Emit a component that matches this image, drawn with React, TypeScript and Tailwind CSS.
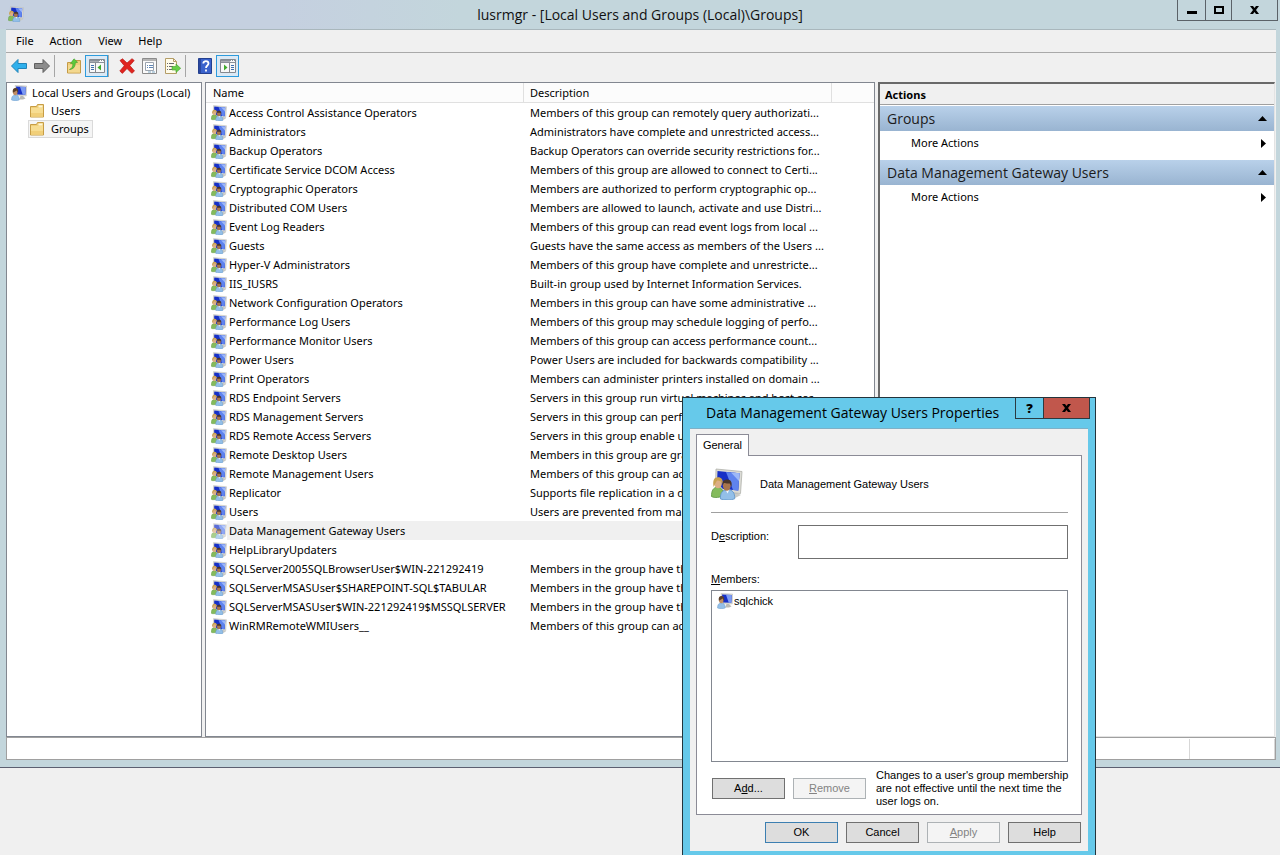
import type { ReactNode } from "react";

interface IGroup {
  name: string;
  desc: string;
}

const groups: IGroup[] = [
  { name: "Access Control Assistance Operators", desc: "Members of this group can remotely query authorizati..." },
  { name: "Administrators", desc: "Administrators have complete and unrestricted access..." },
  { name: "Backup Operators", desc: "Backup Operators can override security restrictions for..." },
  { name: "Certificate Service DCOM Access", desc: "Members of this group are allowed to connect to Certi..." },
  { name: "Cryptographic Operators", desc: "Members are authorized to perform cryptographic op..." },
  { name: "Distributed COM Users", desc: "Members are allowed to launch, activate and use Distri..." },
  { name: "Event Log Readers", desc: "Members of this group can read event logs from local ..." },
  { name: "Guests", desc: "Guests have the same access as members of the Users ..." },
  { name: "Hyper-V Administrators", desc: "Members of this group have complete and unrestricte..." },
  { name: "IIS_IUSRS", desc: "Built-in group used by Internet Information Services." },
  { name: "Network Configuration Operators", desc: "Members in this group can have some administrative ..." },
  { name: "Performance Log Users", desc: "Members of this group may schedule logging of perfo..." },
  { name: "Performance Monitor Users", desc: "Members of this group can access performance count..." },
  { name: "Power Users", desc: "Power Users are included for backwards compatibility ..." },
  { name: "Print Operators", desc: "Members can administer printers installed on domain ..." },
  { name: "RDS Endpoint Servers", desc: "Servers in this group run virtual machines and host ses..." },
  { name: "RDS Management Servers", desc: "Servers in this group can perf..." },
  { name: "RDS Remote Access Servers", desc: "Servers in this group enable u..." },
  { name: "Remote Desktop Users", desc: "Members in this group are gra..." },
  { name: "Remote Management Users", desc: "Members of this group can ac..." },
  { name: "Replicator", desc: "Supports file replication in a d..." },
  { name: "Users", desc: "Users are prevented from mak..." },
  { name: "Data Management Gateway Users", desc: "" },
  { name: "HelpLibraryUpdaters", desc: "" },
  { name: "SQLServer2005SQLBrowserUser$WIN-221292419", desc: "Members in the group have th..." },
  { name: "SQLServerMSASUser$SHAREPOINT-SQL$TABULAR", desc: "Members in the group have th..." },
  { name: "SQLServerMSASUser$WIN-221292419$MSSQLSERVER", desc: "Members in the group have th..." },
  { name: "WinRMRemoteWMIUsers__", desc: "Members of this group can ac..." },
];

const selected = "Data Management Gateway Users";

const GroupIcon = ({ className = "size-4" }: { className?: string }) => (
  <svg viewBox="0 0 32 32" className={`${className} shrink-0`}>
    <path d="M24 24l6 3-6 3h-8z" fill="#c9cac6" />
    <path d="M5 1 31 3.500 29.500 25.500 14 24 4.500 17z" fill="#dcdcd6" stroke="#b0b1ab" strokeWidth=".8" />
    <path d="M6.500 3 28.500 5.200 27.300 22.500 12 21 6 15z" fill="#1730c6" />
    <path d="M15 3.900 28.500 5.200 27.300 22.500 22 22z" fill="#5f83ee" />
    <path d="M20 4.400 28.500 5.200 27.900 13z" fill="#9db8f8" />
    <path d="M.5 28.500C.3 22.500 2.500 19.500 6 19.200c4-.2 6.500 2.800 6.500 8.300-2.800 2-9 2.800-12 1z" fill="#84bb5c" stroke="#5b9340" strokeWidth=".8" />
    <ellipse cx="7" cy="15" rx="3.900" ry="5.300" fill="#dcae85" />
    <path d="M2.600 19C1.500 12.500 3 9.300 7 9.300c3.500 0 5.200 2.500 4.800 6.700-1.300-2.400-3-3.400-5.500-3.400-1.300 1-2 3.200-3.700 6.400z" fill="#c9a253" />
    <path d="M9.500 31C9 25 11.500 21.800 16.500 21.600c5 0 7.500 3.200 7.200 9.200-3.200 1.500-10.500 1.600-14.200.2z" fill="#93bfe8" stroke="#5d92c8" strokeWidth=".8" />
    <path d="M14.500 21.500h4l-2 4z" fill="#f4f8fc" />
    <ellipse cx="15.800" cy="17.500" rx="3.900" ry="5.200" fill="#a8754d" />
    <path d="M11.600 17.500C11 13.500 12.700 11.500 16.200 11.500c3.600.1 5.300 2.600 4.200 7.200L18.800 15.500c-2.500.3-5-.3-6-.5z" fill="#49352a" />
  </svg>
);

const UserIcon = () => (
  <svg viewBox="0 0 32 32" className="size-4 shrink-0">
    <path d="M19 22h5l5 5-5 2h-8z" fill="#b9bab5" />
    <path d="M8 1 31.500 2 30.500 22 12 22z" fill="#dcdcd6" stroke="#b0b1ab" strokeWidth=".8" />
    <path d="M10 3 29.500 4 28.700 19.500 12 19z" fill="#1730c6" />
    <path d="M18 3.400 29.500 4 28.700 19.500 23.500 19.300z" fill="#7c9bf3" />
    <path d="M1 30C.8 23.500 3.500 20 8.500 20s8.300 3.500 8 10c-3.500 1.800-12 1.800-15.500 0z" fill="#93bfe8" stroke="#5d92c8" strokeWidth=".8" />
    <ellipse cx="8.500" cy="14" rx="4.600" ry="6.500" fill="#c08d63" />
    <path d="M3.700 15.500C2.500 9 4.500 5.800 9 5.800c4.500.1 6.500 3.900 5 10L11.500 11z" fill="#5a3e28" />
  </svg>
);

const FolderIcon = () => (
  <svg viewBox="0 0 16 16" className="size-4 shrink-0">
    <path d="M1.500 3.500h6l1-2h6v12.500h-13z" fill="#f0cf78" stroke="#c79d45" />
    <path d="M9.500 2.500h4v2h-4z" fill="#fff6d8" />
    <path d="M2 5h12v8.500H2z" fill="#f7dd92" />
    <path d="M2 10h12v3.500H2z" fill="#f1cf79" />
  </svg>
);

const ArrowIcon = ({ forward = false }: { forward?: boolean }) => (
  <svg viewBox="0 0 16 16" className="size-4">
    {forward ? (
      <path d="M15.500 8 9 1.500v4H.5v5H9v4z" fill="#8b8b8b" stroke="#5f5f5f" strokeLinejoin="round" />
    ) : (
      <path d="M.5 8 7 1.500v4h8.500v5H7v4z" fill="#2fb0ec" stroke="#2284b8" strokeLinejoin="round" />
    )}
  </svg>
);

const UpFolderIcon = () => (
  <svg viewBox="0 0 16 16" className="size-4">
    <path d="M1.500 4.500h7l1-2h5v12.500h-13z" fill="#efce7a" stroke="#c49a47" />
    <path d="M2 7h12v7.500H2z" fill="#f3d88f" />
    <path d="M3.500 11.500C6 10.500 7 8.500 6.800 5.500H4.500L8 .8l3.600 3.500-2.400.6c.2 4-2 6.300-5.700 6.600z" fill="#5ccb3c" stroke="#3f9c2a" strokeWidth=".6" />
  </svg>
);

// console pane toggles, tree on the left or actions on the right
const PaneIcon = ({ right = false }: { right?: boolean }) => (
  <svg viewBox="0 0 16 14" className="h-[14px] w-4">
    <path d="M.5.5h15v13H.5z" fill="#f8f8f8" stroke="#85898f" />
    <path d="M1 1h14v1H1zM1 3h14v1H1z" fill="#8a9099" />
    <path d="M1 2h9v1H1z" fill="#a9adb3" />
    <path d="M11 1h1v1h-1zM13 1h1v1h-1z" fill="#fff" />
    <path d={right ? "M9.500 4v9" : "M6.500 4v9"} stroke="#85898f" />
    <path d={right ? "M11 6.500h3M11 8.500h3M11 10.500h3" : "M2 6.500h3M2 8.500h3M2 10.500h3"} stroke="#3f6fae" />
    <path d={right ? "M4 5.500v6l3.500-3z" : "M12 5.500v6l-3.500-3z"} fill="#3faa2c" />
  </svg>
);

const DeleteIcon = () => (
  <svg viewBox="0 0 16 16" className="size-4">
    <path d="M1 2.500 3.500.8 8 5l5-4.300 2.200 1.800L10.800 7.600l4.700 5.400-2.700 2.300L8 10.500l-4.600 4.900L.8 13l4.500-5.300z" fill="#e0241f" stroke="#b71713" strokeWidth=".7" />
  </svg>
);

const PropsIcon = () => (
  <svg viewBox="0 0 16 16" className="size-4">
    <path d="M.5.5h14v15H.5z" fill="#fafafa" stroke="#8b8b8b" />
    <path d="M1 1h13v2H1z" fill="#b5b5b5" />
    <path d="M3.500 4.500h8v8h-8z" fill="#fff" stroke="#9ca4ae" />
    <path d="M5 7.500h1M7 7.500h4M5 9.500h1M7 9.500h4" stroke="#5f86b5" />
    <path d="M6 14h3M10 14h3" stroke="#7fa9c4" />
  </svg>
);

const ExportIcon = () => (
  <svg viewBox="0 0 16 16" className="size-4">
    <path d="M.5.5h8l3 3v12H.5z" fill="#fffbe9" stroke="#b49d66" />
    <path d="M8.500.5v3h3" fill="none" stroke="#b49d66" />
    <path d="M2 5.500h1M2 8.500h1M2 11.500h1M4 5.500h5M4 8.500h4M4 11.500h3" stroke="#66666e" />
    <path d="M7 8.500h4V6l4.700 4.300L11 14.500V12H7z" fill="#67cf48" stroke="#43a02c" strokeWidth=".6" />
  </svg>
);

const HelpIcon = () => (
  <svg viewBox="0 0 14 16" className="h-4 w-[14px]">
    <path d="M.5.5h13v15H.5z" fill="#3a62cc" stroke="#24408f" />
    <path d="M1 1h2v14H1z" fill="#2a479f" />
    <path d="M5.300 5.500c0-3.300 5.200-3.300 5.200 0 0 2-2.500 2-2.500 4.500M8 11.500v2" fill="none" stroke="#fff" strokeWidth="1.800" />
  </svg>
);

const CloseMark = () => (
  <svg viewBox="0 0 9 8" className="h-2 w-[9px]">
    <path d="M0 0h3l1.500 2L6 0h3L6 4l3 4H6L4.500 6 3 8H0l3-4z" />
  </svg>
);

const ToolButton = ({ label, active = false, children }: { label: string; active?: boolean; children: ReactNode }) => (
  <button
    type="button"
    aria-label={label}
    className={
      active
        ? "flex h-[22px] w-[23px] items-center justify-center border border-[#2d9bdc] bg-[#dbe9f5]"
        : "flex h-[22px] w-[23px] items-center justify-center"
    }
  >
    {children}
  </button>
);

const Separator = () => <span className="h-[22px] w-px bg-[#a6a6a6]" />;

const TitleBar = () => (
  <header className="flex h-[29px] shrink-0 items-start bg-[linear-gradient(90deg,#c5d0e0_0,#c5d0e0_22%,#c3d6dc_36%)]">
    <div className="flex w-[103px] pt-[6px] pl-2">
      <GroupIcon />
    </div>
    <h1 className="flex-1 text-center font-['Open_Sans','Noto_Sans',sans-serif] text-[14px] leading-[30px] text-[#111]">
      lusrmgr - [Local Users and Groups (Local)\Groups]
    </h1>
    <div className="mr-[2px] flex h-[21px] border border-t-0 border-[#5b6268]">
      <button type="button" aria-label="Minimize" className="flex w-7 items-center justify-center border-r border-[#5b6268]">
        <svg viewBox="0 0 10 10" className="size-[10px]">
          <path d="M0 6h10v3H0z" />
        </svg>
      </button>
      <button type="button" aria-label="Maximize" className="flex w-[26px] items-center justify-center border-r border-[#5b6268]">
        <svg viewBox="0 0 10 8" className="h-2 w-[10px]">
          <path d="M1 1h8v6H1z" fill="none" stroke="#000" strokeWidth="2" />
        </svg>
      </button>
      <button type="button" aria-label="Close" className="flex w-[45px] items-center justify-center">
        <CloseMark />
      </button>
    </div>
  </header>
);

const Toolbar = () => (
  <div role="toolbar" className="flex h-[30px] shrink-0 items-center border-t border-[#a9a9a9] pb-1 pl-px">
    <div className="flex pr-px">
      <ToolButton label="Back">
        <ArrowIcon />
      </ToolButton>
      <ToolButton label="Forward">
        <ArrowIcon forward />
      </ToolButton>
    </div>
    <Separator />
    <div className="flex pl-[7px]">
      <ToolButton label="Up one level">
        <UpFolderIcon />
      </ToolButton>
      <ToolButton label="Show/Hide Console Tree" active>
        <PaneIcon />
      </ToolButton>
    </div>
    <Separator />
    <div className="flex pr-px pl-[6px]">
      <ToolButton label="Delete">
        <DeleteIcon />
      </ToolButton>
      <ToolButton label="Properties">
        <PropsIcon />
      </ToolButton>
      <ToolButton label="Export List">
        <ExportIcon />
      </ToolButton>
    </div>
    <Separator />
    <div className="flex pl-[7px]">
      <ToolButton label="Help">
        <HelpIcon />
      </ToolButton>
      <ToolButton label="Show/Hide Action Pane" active>
        <PaneIcon right />
      </ToolButton>
    </div>
  </div>
);

const Tree = () => (
  <nav className="w-[196px] shrink-0 border border-[#828790] bg-white pt-px pl-1 whitespace-nowrap">
    <div className="flex h-[18px] items-center gap-[5px]">
      <UserIcon />
      <span>Local Users and Groups (Local)</span>
    </div>
    <div className="flex h-[18px] items-center gap-[6px] pl-[18px]">
      <FolderIcon />
      <span>Users</span>
    </div>
    <div className="ml-[17px] flex h-[18px] w-fit items-center gap-[6px] border border-[#dadada] bg-[#f5f5f5] pr-[3px]">
      <FolderIcon />
      <span>Groups</span>
    </div>
  </nav>
);

const GroupTable = () => (
  <section className="w-[670px] shrink-0 overflow-hidden border border-[#828790] bg-white">
    <table className="w-full table-fixed border-separate border-spacing-0 whitespace-nowrap">
      <thead>
        <tr className="h-5 bg-[#fcfcfc] text-left">
          <th className="w-[318px] border-r border-b border-[#e0e0e0] p-0 pl-[7px] font-normal">Name</th>
          <th className="w-[308px] border-r border-b border-[#e0e0e0] p-0 pl-[6px] font-normal">Description</th>
          <th className="border-b border-[#e0e0e0] p-0" />
        </tr>
      </thead>
      <tbody>
        {groups.map((group) => {
          const isSelected = group.name === selected;
          return (
            <tr key={group.name}>
              <td className="p-0 pl-[5px]">
                <div className="flex h-[19px] items-center">
                  <GroupIcon className={isSelected ? "size-4 opacity-70" : "size-4"} />
                  <span className={isSelected ? "flex-1 bg-[#f0f0f0] pl-[2px] leading-[19px]" : "pl-[2px]"}>
                    {group.name}
                  </span>
                </div>
              </td>
              <td className={isSelected ? "bg-[#f0f0f0] p-0 pl-[6px]" : "p-0 pl-[6px]"}>{group.desc}</td>
              <td className="p-0" />
            </tr>
          );
        })}
      </tbody>
    </table>
  </section>
);

const ActionSection = ({ title }: { title: string }) => (
  <section className="mb-[5px]">
    <h3 className="flex h-[25px] items-center justify-between bg-linear-to-b from-[#b9d1ea] to-[#99b4d1] pr-[7px] pl-[7px] font-['Open_Sans','Noto_Sans',sans-serif] text-[14px] text-[#1b1b1b]">
      {title}
      <svg viewBox="0 0 9 5" className="h-[5px] w-[9px]">
        <path d="M0 5 4.500 0 9 5z" />
      </svg>
    </h3>
    <button type="button" className="flex h-6 w-full items-center justify-between pr-2 pl-[31px]">
      More Actions
      <svg viewBox="0 0 5 9" className="h-[9px] w-[5px]">
        <path d="M0 0 5 4.500 0 9z" />
      </svg>
    </button>
  </section>
);

const ActionsPane = () => (
  <aside className="min-w-0 flex-1 border-t-2 border-r border-b border-l-2 border-t-[#696969] border-r-[#e3e3e3] border-b-[#e3e3e3] border-l-[#696969] bg-white">
    <h2 className="mb-px h-[21px] border-b border-[#a0a0a0] bg-[#f0f0f0] pl-[5px] leading-[21px] font-bold">Actions</h2>
    <ActionSection title="Groups" />
    <ActionSection title="Data Management Gateway Users" />
  </aside>
);

const DialogButton = ({ children, primary = false, disabled = false }: { children: ReactNode; primary?: boolean; disabled?: boolean }) => {
  let look = "border-[#707070] bg-[#dddddd]";
  if (primary) look = "border-[#3c7fb1] bg-[#dddddd]";
  if (disabled) look = "border-[#adb2b5] bg-[#f4f4f4] text-[#838383]";
  return (
    <button type="button" disabled={disabled} className={`h-[21px] w-[73px] shrink-0 border ${look}`}>
      {children}
    </button>
  );
};

const PropertiesDialog = () => (
  <div
    role="dialog"
    aria-labelledby="dialog-title"
    className="absolute top-[397px] left-[682px] flex h-[459px] w-[414px] flex-col border border-[#23343c] bg-[#66c9ea] px-[7px] pb-1 font-['Liberation_Sans',sans-serif] text-[11px] leading-[13px]"
  >
    <div className="flex h-[30px] shrink-0 items-start justify-between">
      <h2 id="dialog-title" className="pl-4 font-['Open_Sans','Noto_Sans',sans-serif] text-[14px] leading-[29px] whitespace-nowrap">
        Data Management Gateway Users Properties
      </h2>
      <div className="-mr-[2px] flex h-[21px] border border-t-0 border-[#2b3a41]">
        <button type="button" aria-label="Context help" className="w-7 border-r border-[#2b3a41] font-['Open_Sans',sans-serif] text-[13px] font-extrabold">
          ?
        </button>
        <button type="button" aria-label="Close" className="flex w-[45px] items-center justify-center bg-[#c1574c]">
          <CloseMark />
        </button>
      </div>
    </div>
    <div className="flex flex-1 flex-col border-t border-[#7fb0c6] bg-[#f0f0f0] px-[6px] pt-[5px]">
      <div role="tablist" className="flex">
        <button type="button" role="tab" aria-selected="true" className="relative z-10 -mb-px h-[22px] w-[53px] border border-b-0 border-[#8b8b96] bg-white">
          General
        </button>
      </div>
      <div role="tabpanel" className="flex flex-col border border-[#8b8b96] bg-white pr-[13px] pb-[6px] pl-[14px]">
        <div className="flex h-[57px] items-center gap-[17px] border-b border-[#a0a0a0]">
          <GroupIcon className="size-8" />
          <span>Data Management Gateway Users</span>
        </div>
        <div className="mt-3 flex items-start justify-between">
          <label htmlFor="description" className="pt-[5px]">
            D<u>e</u>scription:
          </label>
          <input id="description" type="text" className="h-[34px] w-[270px] border border-[#707070] bg-white px-1 outline-none" />
        </div>
        <h3 className="mt-[14px] mb-[4px]">
          <u>M</u>embers:
        </h3>
        <ul className="h-[172px] border border-[#828790] px-[5px] pt-[2px]">
          <li className="flex items-center gap-px">
            <UserIcon />
            sqlchick
          </li>
        </ul>
        <div className="mt-[7px] flex items-center gap-2 pl-px">
          <DialogButton>
            A<u>d</u>d...
          </DialogButton>
          <DialogButton disabled>
            <u>R</u>emove
          </DialogButton>
          <p className="pl-[2px] whitespace-nowrap">
            Changes to a user&apos;s group membership
            <br />
            are not effective until the next time the
            <br />
            user logs on.
          </p>
        </div>
      </div>
      <div className="mt-[7px] flex justify-end gap-2 pr-px">
        <DialogButton primary>OK</DialogButton>
        <DialogButton>Cancel</DialogButton>
        <DialogButton disabled>
          <u>A</u>pply
        </DialogButton>
        <DialogButton>Help</DialogButton>
      </div>
    </div>
  </div>
);

const App = () => {
  return (
    <div className="relative h-screen overflow-hidden bg-[#f0f0f0] font-['Noto_Sans','Open_Sans',sans-serif] text-[11px] leading-[18px] text-black">
      <div className="flex h-[calc(100vh-87px)] flex-col border-b border-[#5c5f70] bg-[#c3d6dc]">
        <TitleBar />
        <main className="mr-1 mb-[7px] ml-[6px] flex min-h-0 flex-1 flex-col border-t border-[#a9b7bc] bg-[#f0f0f0]">
          <div role="menubar" className="flex h-[22px] shrink-0 items-center gap-4 pl-[10px]">
            <button type="button">File</button>
            <button type="button">Action</button>
            <button type="button">View</button>
            <button type="button">Help</button>
          </div>
          <Toolbar />
          <div className="flex min-h-0 flex-1 gap-[3px] pr-px">
            <Tree />
            <GroupTable />
            <ActionsPane />
          </div>
          <footer className="flex h-[23px] shrink-0 justify-end border border-[#a0a0a0] bg-white pt-px">
            <span className="w-[86px] border-x border-[#d7d7d7]" />
          </footer>
        </main>
      </div>
      <PropertiesDialog />
    </div>
  );
};

export default App;
